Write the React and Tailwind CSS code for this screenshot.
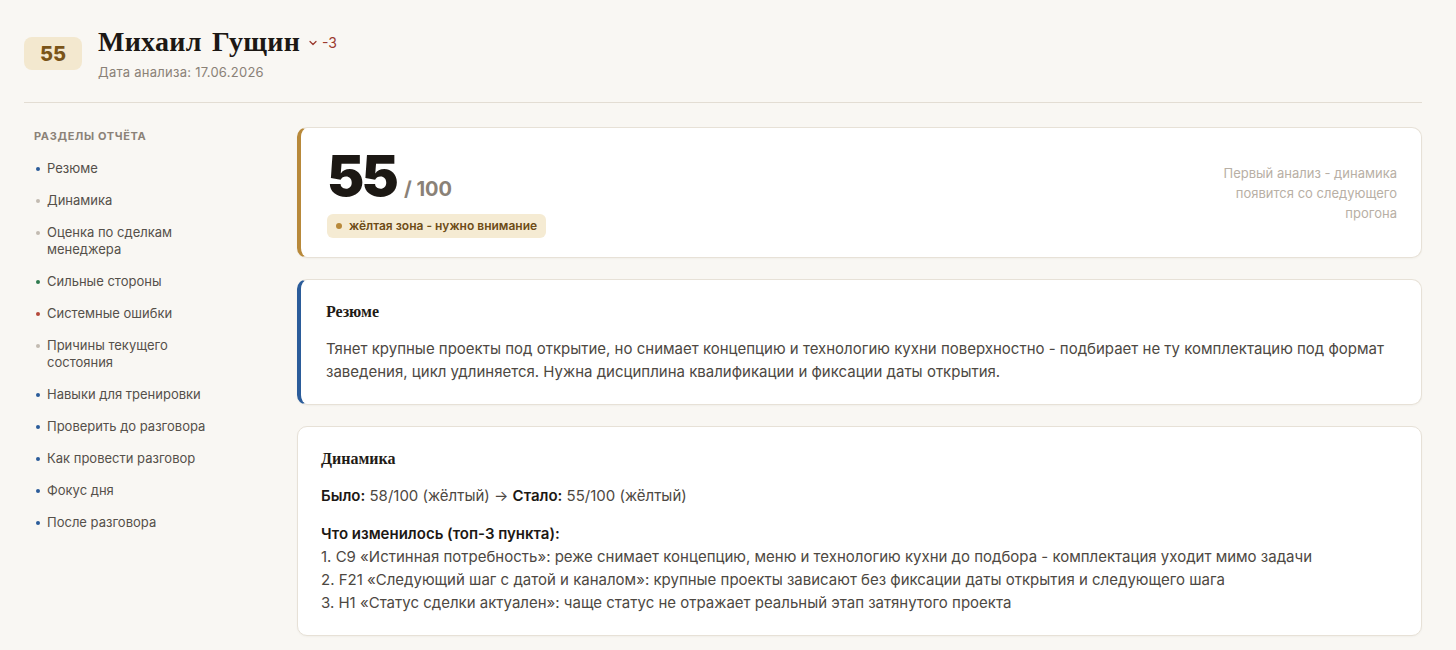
import { ChevronDown } from 'lucide-react';

const sans = { fontFamily: 'Inter, "Noto Sans", sans-serif' };
const serif = { fontFamily: '"Liberation Serif", "DejaVu Serif", serif' };

const sections = [
    { label: 'Резюме', dot: 'bg-[#2b5c9a]' },
    { label: 'Динамика', dot: 'bg-[#c3bbb1]' },
    { label: 'Оценка по сделкам менеджера', dot: 'bg-[#c3bbb1]' },
    { label: 'Сильные стороны', dot: 'bg-[#2f7a4f]' },
    { label: 'Системные ошибки', dot: 'bg-[#b5483a]' },
    { label: 'Причины текущего состояния', dot: 'bg-[#c3bbb1]' },
    { label: 'Навыки для тренировки', dot: 'bg-[#2b5c9a]' },
    { label: 'Проверить до разговора', dot: 'bg-[#2b5c9a]' },
    { label: 'Как провести разговор', dot: 'bg-[#2b5c9a]' },
    { label: 'Фокус дня', dot: 'bg-[#2b5c9a]' },
    { label: 'После разговора', dot: 'bg-[#2b5c9a]' },
];

// остальные разделы отчёта, ниже первого экрана
const moreCards = [
    {
        title: 'Оценка по сделкам менеджера',
        lines: [
            'Проанализировано 14 сделок за период: 6 в работе, 5 выиграно, 3 проиграно.',
            'Средний цикл сделки - 47 дней, что на 12 дней длиннее среднего по отделу.',
        ],
    },
    {
        title: 'Сильные стороны',
        lines: [
            '1. Уверенно ведёт крупных клиентов и удерживает контакт с ЛПР.',
            '2. Хорошо знает ассортимент оборудования и может аргументировать выбор.',
            '3. Быстро реагирует на входящие запросы.',
        ],
    },
    {
        title: 'Системные ошибки',
        lines: [
            '1. Не уточняет концепцию заведения и меню до подбора комплектации.',
            '2. Не фиксирует дату открытия и следующий шаг в CRM.',
            '3. Статусы сделок не обновляются после встреч.',
        ],
    },
    {
        title: 'Причины текущего состояния',
        lines: ['Фокус на продукте, а не на задаче клиента. Квалификация проходит формально.'],
    },
    {
        title: 'Навыки для тренировки',
        lines: [
            '1. Выявление потребности через концепцию и технологию кухни.',
            '2. Фиксация следующего шага с датой и каналом.',
        ],
    },
    {
        title: 'Проверить до разговора',
        lines: ['Открыть три крупные сделки с датой открытия в ближайшие 2 месяца и сверить статусы.'],
    },
    {
        title: 'Как провести разговор',
        lines: ['Начать с сильных сторон, затем разобрать одну сделку по шагам и договориться о правиле фиксации даты.'],
    },
    {
        title: 'Фокус дня',
        lines: ['Квалификация: концепция, меню, технология - до подбора комплектации.'],
    },
    {
        title: 'После разговора',
        lines: ['Проверить через неделю обновление статусов и даты открытия по крупным проектам.'],
    },
];

const Card = ({ title, accent, children }) => (
    <section
        className={`rounded-[10px] border border-[#e7e1d7] bg-white pr-6 pt-[22px] pb-[21px] shadow-[0_1px_2px_rgba(60,40,20,0.04)] ${accent || 'pl-[23px]'}`}
    >
        <h2 className="mb-[15px] text-[16px] font-bold leading-5 text-[#1f1b16]" style={serif}>
            {title}
        </h2>
        <div className="text-[15px] leading-[23px] text-[#4d4842]">{children}</div>
    </section>
);

export default function App() {
    return (
        <div className="h-screen overflow-y-auto bg-[#f9f7f3] [scrollbar-color:#b5ab9f_#f9f7f3]" style={sans}>
            <div className="pl-6 pr-[34px] pb-10">
                <header className="flex items-center gap-4 border-b border-[#e3ddd3] pt-[25px] pb-5">
                    <div className="flex h-[33px] w-[58px] items-center justify-center rounded-lg bg-[#f3e8cf] text-[20px] font-extrabold text-[#7a5418]">
                        55
                    </div>
                    <div>
                        <div className="flex items-center">
                            <h1 className="text-[28px] font-bold leading-[34px] tracking-[0.01em] text-[#1c1814] [word-spacing:3px]" style={serif}>
                                Михаил Гущин
                            </h1>
                            <ChevronDown className="ml-[7px] mt-[2px] h-[12px] w-[12px] text-[#9b3a2e]" strokeWidth={2.5} />
                            <span className="ml-[3px] text-[14px] text-[#9b3a2e]">-3</span>
                        </div>
                        <div className="mt-[3px] text-[13px] leading-5 tracking-[0.02em] text-[#8a8177]">Дата анализа: 17.06.2026</div>
                    </div>
                </header>

                <div className="flex pt-6">
                    <aside className="w-[273px] shrink-0 pl-[10px] pt-px">
                        <div className="mb-[16px] text-[11px] font-bold uppercase leading-4 tracking-[0.06em] text-[#8b8278]">
                            Разделы отчёта
                        </div>
                        <ul className="flex w-[185px] flex-col gap-[15px]">
                            {sections.map((s) => (
                                <li key={s.label} className="flex items-start gap-[7px] text-[13px] leading-[17px] text-[#55504a]">
                                    <span className={`mt-[7px] ml-[2px] h-[4px] w-[4px] shrink-0 rounded-full ${s.dot}`} />
                                    <span>{s.label}</span>
                                </li>
                            ))}
                        </ul>
                    </aside>

                    <main className="flex min-w-0 flex-1 flex-col gap-[21px]">
                        <section className="flex items-center justify-between rounded-[10px] border border-l-4 border-[#e7e1d7] border-l-[#b8893a] bg-white pt-5 pb-[19px] pl-[26px] pr-6 shadow-[0_1px_2px_rgba(60,40,20,0.04)]">
                            <div>
                                <div className="flex items-baseline gap-2">
                                    <span className="text-[56px] font-black leading-[56px] tracking-[-0.05em] text-[#1c1814]">55</span>
                                    <span className="text-[20px] font-bold text-[#8a8177]">/ 100</span>
                                </div>
                                <div className="mt-[10px] inline-flex h-6 items-center gap-[7px] rounded-md bg-[#f5ebd3] px-[9px] text-[12px] font-semibold text-[#6e4c17]">
                                    <span className="h-[6px] w-[6px] rounded-full bg-[#b8893a]" />
                                    жёлтая зона - нужно внимание
                                </div>
                            </div>
                            <p className="w-[180px] text-right text-[13px] leading-5 text-[#b8afa5]">
                                Первый анализ - динамика появится со следующего прогона
                            </p>
                        </section>

                        <Card title="Резюме" accent="border-l-4 border-l-[#2b5c9a] pl-[25px]">
                            <p>
                                Тянет крупные проекты под открытие, но снимает концепцию и технологию кухни поверхностно - подбирает
                                не ту комплектацию под формат заведения, цикл удлиняется. Нужна дисциплина квалификации и фиксации
                                даты открытия.
                            </p>
                        </Card>

                        <Card title="Динамика">
                            <p className="mb-[15px]">
                                <b className="font-semibold text-[#1c1814]">Было:</b> 58/100 (жёлтый) →{' '}
                                <b className="font-semibold text-[#1c1814]">Стало:</b> 55/100 (жёлтый)
                            </p>
                            <p>
                                <b className="font-semibold text-[#1c1814]">Что изменилось (топ-3 пункта):</b>
                                <br />
                                1. C9 «Истинная потребность»: реже снимает концепцию, меню и технологию кухни до подбора - комплектация
                                уходит мимо задачи
                                <br />
                                2. F21 «Следующий шаг с датой и каналом»: крупные проекты зависают без фиксации даты открытия и
                                следующего шага
                                <br />
                                3. H1 «Статус сделки актуален»: чаще статус не отражает реальный этап затянутого проекта
                            </p>
                        </Card>

                        {moreCards.map((c) => (
                            <Card key={c.title} title={c.title}>
                                {c.lines.map((l) => (
                                    <p key={l}>{l}</p>
                                ))}
                            </Card>
                        ))}
                    </main>
                </div>
            </div>
        </div>
    );
}
